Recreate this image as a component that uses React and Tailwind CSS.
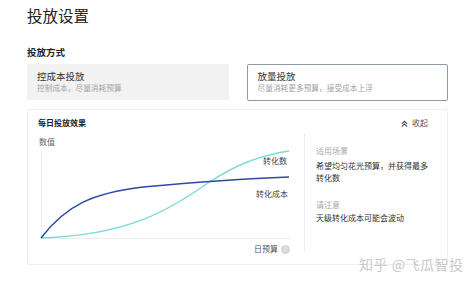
import React from 'react';

const modes = [
  { title: '控成本投放', desc: '控制成本，尽量消耗预算', active: false },
  { title: '放量投放', desc: '尽量消耗更多预算，接受成本上浮', active: true },
];

const Chart = () => (
  <div className="relative w-[266px] h-[136px]">
    <div className="absolute left-[1px] top-[9px] text-[8px] leading-[10px] text-[#666]">数值</div>
    <svg className="absolute left-0 top-[21px]" width="256" height="94" viewBox="0 0 256 94">
      <line x1="3.5" y1="3" x2="3.5" y2="89.5" stroke="#ececec" strokeWidth="1" />
      <line x1="3" y1="89.5" x2="252" y2="89.5" stroke="#ececec" strokeWidth="1" />
      <path d="M3 89 C 90 86, 130 62, 170 34 C 200 14, 225 6, 251 2" fill="none" stroke="#7ddcd3" strokeWidth="1.5" />
      <path d="M3 89 C 28 56, 55 44, 105 38 C 160 33, 200 30, 251 28" fill="none" stroke="#2d4aa3" strokeWidth="1.5" />
    </svg>
    {/* line labels */}
    <span className="absolute left-[225px] top-[28px] text-[8px] leading-[10px] text-[#444]">转化数</span>
    <span className="absolute left-[218px] top-[61px] text-[8px] leading-[10px] text-[#444]">转化成本</span>
    <div className="absolute left-[216px] top-[116px] flex items-center gap-[3px] text-[8px] leading-[10px] text-[#555]">
      <span>日预算</span>
      <span className="w-[9px] h-[9px] rounded-full bg-[#d6d6d6] text-white text-[6px] leading-[9px] text-center">?</span>
    </div>
  </div>
);

export default function App() {
  return (
    <div className="relative w-[474px] h-[284px] bg-white overflow-hidden px-[27px] pr-[26px] text-[#333]" style={{ fontFamily: '"Noto Sans CJK SC", "Noto Sans", sans-serif' }}>
      <h1 className="pt-[4px] text-[15.5px] leading-[22px] text-[#222]">投放设置</h1>

      <div className="mt-[20px] text-[9.5px] leading-[12px] font-bold text-[#222]">投放方式</div>

      {/* mode cards */}
      <div className="mt-[6px] grid grid-cols-2 gap-[18px]">
        {modes.map((m) => (
          <div
            key={m.title}
            className={
              m.active
                ? 'h-[37px] rounded-[2px] border border-[#8f97a8] bg-white px-[10px] pt-[5px]'
                : 'h-[36px] rounded-[1px] bg-[#f2f2f2] px-[10px] pt-[6px]'
            }
          >
            <div className="text-[9.5px] leading-[12px] text-[#333]">{m.title}</div>
            <div className="mt-[1px] text-[7.7px] leading-[10px] text-[#a3a3a3]">{m.desc}</div>
          </div>
        ))}
      </div>

      {/* daily effect panel */}
      <div className="mt-[8px] h-[156px] rounded-[2px] border border-[#eeeeee] pl-[10px] pr-[19px]">
        <div className="flex items-center justify-between pt-[8px]">
          <span className="text-[8px] leading-[10px] font-bold text-[#222]">每日投放效果</span>
          <span className="flex items-center gap-[4px] text-[8px] leading-[10px] text-[#555]">
            <svg width="7" height="7" viewBox="0 0 8 8" fill="none" stroke="#444" strokeWidth="1.2">
              <path d="M1 4.5 L4 1.5 L7 4.5" />
              <path d="M1 7.5 L4 4.5 L7 7.5" />
            </svg>
            收起
          </span>
        </div>
        <div className="flex">
          <Chart />
          <div className="mt-[6px] h-[118px] border-l border-[#eeeeee] pl-[11px] pt-[12px]">
            <div className="text-[8px] leading-[10px] text-[#aaaaaa]">适用场景</div>
            <div className="mt-[4px] w-[112px] text-[8px] leading-[12px] text-[#333]">希望均匀花光预算，并获得最多转化数</div>
            <div className="mt-[16px] text-[8px] leading-[10px] text-[#aaaaaa]">请注意</div>
            <div className="mt-[3px] text-[8px] leading-[10px] text-[#333]">天级转化成本可能会波动</div>
          </div>
        </div>
      </div>

      {/* watermark */}
      <div className="absolute left-[359px] top-[254px] text-[14px] leading-[20px] tracking-[0.5px] text-[#c9c9c9]">知乎 @飞瓜智投</div>
    </div>
  );
}
